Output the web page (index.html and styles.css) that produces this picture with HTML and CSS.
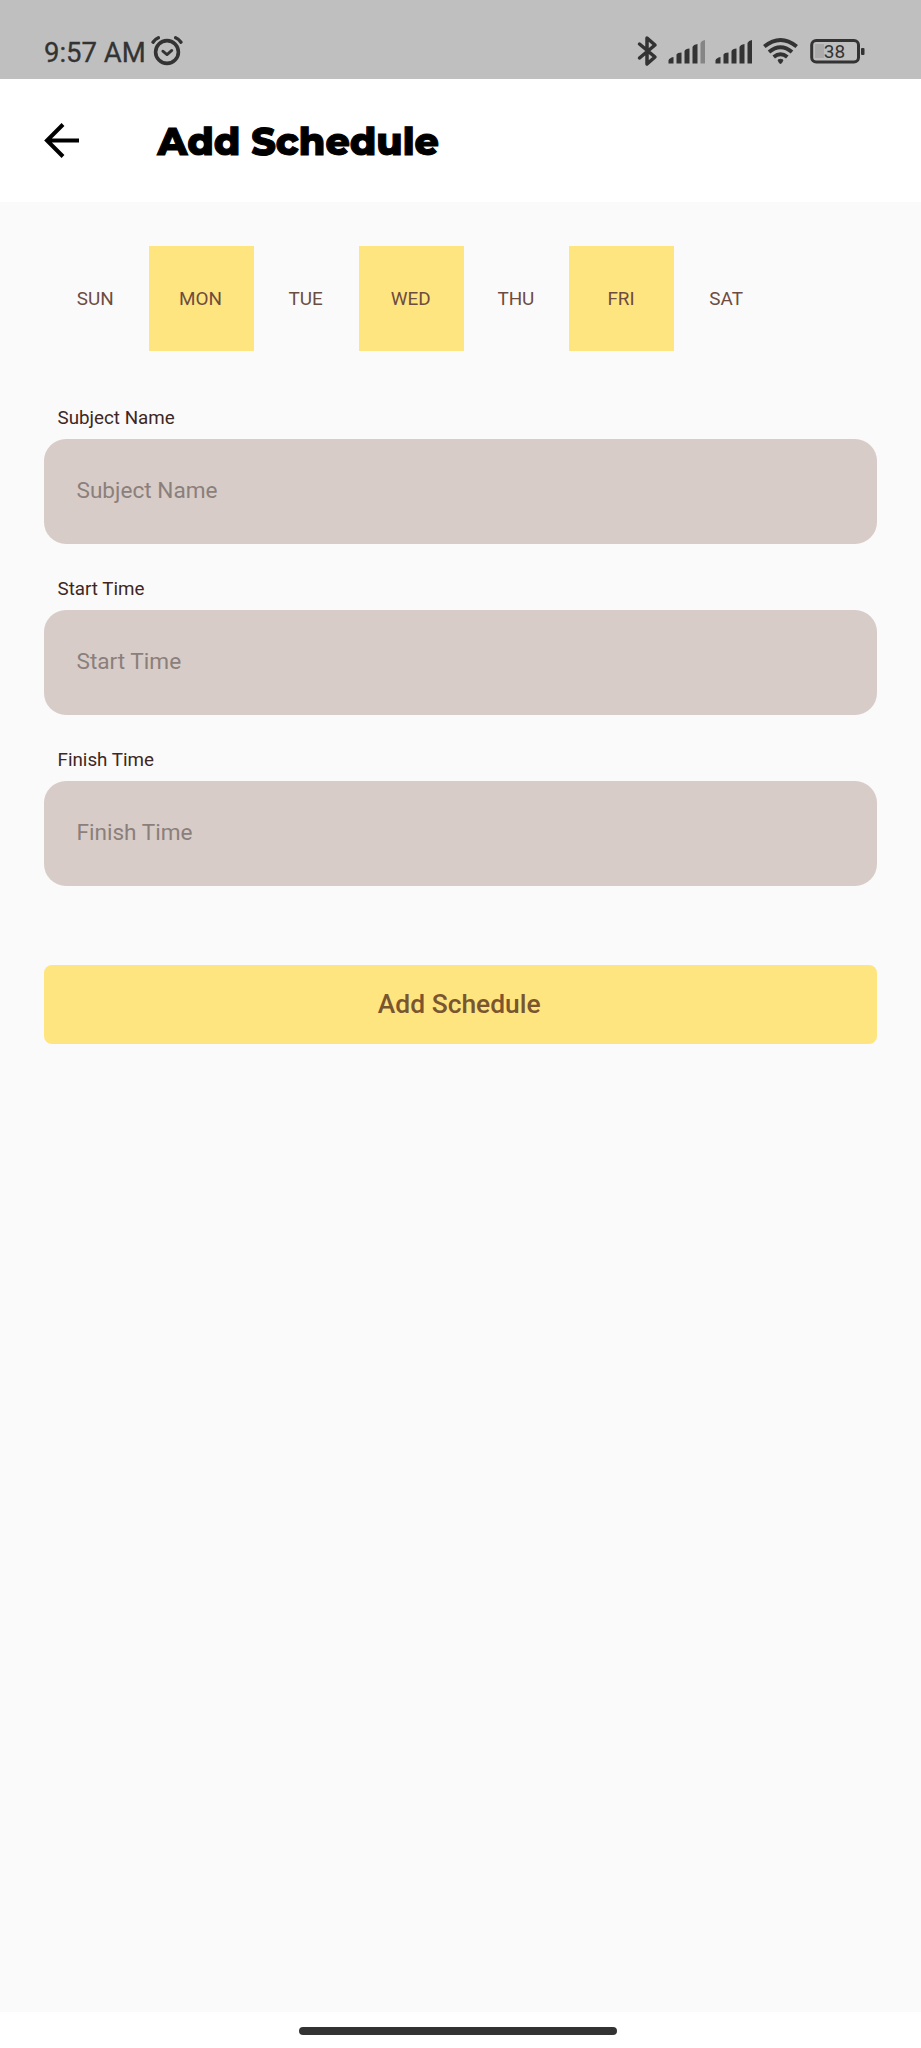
FILE: index.html
```html
<!DOCTYPE html>
<html lang="en">
<head>
<meta charset="utf-8">
<title>Add Schedule</title>
<link rel="stylesheet" href="styles.css">
</head>
<body>
<div class="screen">
  <div class="status-bar">
    <span class="clock">9:57 AM</span>
    <svg class="alarm" width="34" height="32" viewBox="0 0 34 32" fill="none" stroke="#333" stroke-linecap="round" stroke-linejoin="round">
      <circle cx="17" cy="18" r="11.4" stroke-width="3.6"/>
      <path d="M12.8 17.2L17 20.600L21.8 16.4" stroke-width="2.8"/>
      <path d="M3 8.200Q5 5.200 8.4 3.800M31 8.200Q29 5.200 25.6 3.800" stroke-width="3.4"/>
    </svg>
    <svg class="indicators" width="240" height="34" viewBox="630 34 240 34">
      <path d="M640.500 44L656 57L648 64V38L656 45L640.500 58" fill="none" stroke="#333" stroke-width="3.500" stroke-linejoin="round" stroke-linecap="round"/>
      <g fill="#333">
        <path d="M669.500 63.500V60.500Q670 58 674.500 57V63.500ZM677.500 63.500V54.500Q678.500 52.500 682.500 52.500V63.500ZM685.500 63.500V51Q686.500 48.500 690.500 48.500V63.500ZM693.500 63.500V47Q694.500 44.500 698.500 44V63.500Z"/>
        <path d="M701.500 63.500V43Q702.500 40.500 706 40V63.500Z" fill="#858585"/>
        <path d="M716.500 63.500V60.500Q717 58 721.500 57V63.500ZM724.500 63.500V54.500Q725.500 52.500 729.500 52.500V63.500ZM732.500 63.500V51Q733.500 48.500 737.500 48.500V63.500ZM740.500 63.500V47Q741.500 44.500 745.500 44V63.500ZM748.500 63.500V43Q749.500 40.500 753 40V63.500Z"/>
        <path d="M779 60Q781.500 58.500 784 60L782.500 63Q781.500 64 780.500 63Z" stroke="#333"/>
      </g>
      <path d="M765.300 46.500Q781.500 33.500 797.700 46.500M770 52Q781.500 42.500 793 52M774.700 57Q781.500 51.500 788.300 57" fill="none" stroke="#333" stroke-width="4"/>
      <path d="M816 44H825V58H816Z" fill="#ababab"/>
      <rect x="812.700" y="40.500" width="46.800" height="21.500" rx="4.500" fill="none" stroke="#333" stroke-width="3"/>
      <rect x="862" y="48" width="3.500" height="7" rx="1" fill="#333"/>
      <text class="battery-level" x="835.500" y="57.800" text-anchor="middle">38</text>
    </svg>
  </div>
  <header class="app-bar">
    <svg class="back" width="38" height="38" viewBox="0 0 38 38" fill="none" stroke="#000" stroke-width="4">
      <path d="M37 19.500H5M21 3.500L5 19.500L21 35.500"/>
    </svg>
    <h1 class="title">Add Schedule</h1>
  </header>
  <main class="content">
    <div class="days">
      <span class="day">SUN</span>
      <span class="day selected">MON</span>
      <span class="day">TUE</span>
      <span class="day selected">WED</span>
      <span class="day">THU</span>
      <span class="day selected">FRI</span>
      <span class="day">SAT</span>
    </div>
    <div class="field"><div class="label">Subject Name</div><div class="input">Subject Name</div></div>
    <div class="field"><div class="label">Start Time</div><div class="input">Start Time</div></div>
    <div class="field"><div class="label">Finish Time</div><div class="input">Finish Time</div></div>
    <div class="submit">Add Schedule</div>
  </main>
  <div class="nav-bar"><div class="handle"></div></div>
</div>
</body>
</html>
```

FILE: styles.css
```css
* { box-sizing: border-box; }
body { margin: 0; font-family: Roboto, sans-serif; }
.screen { width: 921px; height: 2048px; display: flex; flex-direction: column; background: #fafafa; }

.status-bar { height: 79px; flex: none; background: #bfbfbf; display: flex; align-items: flex-start; padding-left: 44px; color: #333; }
.clock { font-size: 27.500px; line-height: 32px; margin-top: 37px; width: 106px; white-space: nowrap; -webkit-text-stroke: 0.300px #333; }
.alarm { margin-top: 34px; }
.indicators { margin: 34px 52px 0 auto; }
.battery-level { font: 400 19px Roboto, sans-serif; fill: #333; }

.app-bar { height: 123px; flex: none; background: #fff; display: flex; align-items: center; padding: 0 0 1px 42px; }
.back { flex: none; }
.title { margin: 3px 0 0 77.500px; font: 800 38px/44px Montserrat, Inter, sans-serif; -webkit-text-stroke: 1px #000; color: #000; white-space: nowrap; }

.content { flex: 1; padding: 43.700px 44px 0 43.500px; }
.days { display: flex; height: 105.300px; margin-bottom: 54px; }
.day { width: 105.150px; flex: none; display: flex; align-items: center; justify-content: center; padding: 0 1.500px 0 0; font-size: 18.900px; color: #6d4c41; }
.selected { background: #ffe57f; }
.field { height: 171.200px; }
.label { height: 34px; padding-left: 14px; font-size: 18.800px; line-height: 26px; color: #3e2723; }
.input { height: 105px; border-radius: 22px; background: #d7ccc8; padding-left: 33px; font-size: 22.600px; line-height: 104px; color: #8b7f7b; }
.submit { height: 79px; margin-top: 46px; border-radius: 8px; background: #ffe57f; color: #795530; padding-right: 2px; font-size: 26.400px; font-weight: 500; line-height: 79px; text-align: center; }

.nav-bar { height: 36px; flex: none; background: #fff; display: flex; justify-content: center; padding: 14.500px 5px 0 0; }
.handle { width: 318px; height: 8.500px; border-radius: 5px; background: #333; }
```
